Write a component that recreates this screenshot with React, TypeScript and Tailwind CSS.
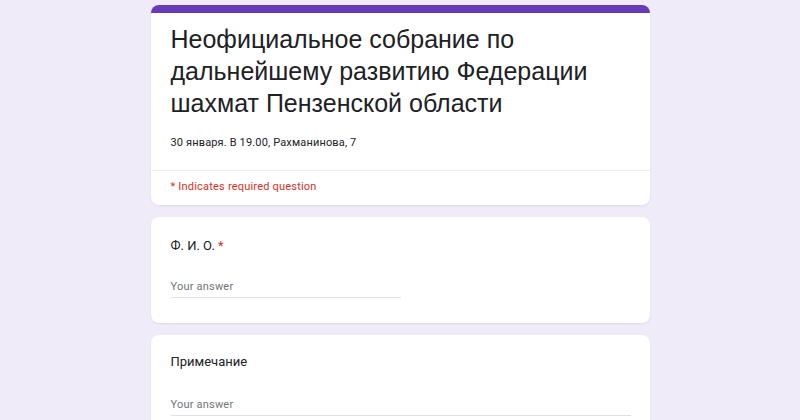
import React from 'react';

function AnswerField({ width }: { width: string }) {
  return (
    <div className={`${width} border-b border-[#e0e0e0] pb-[3px]`}>
      <span className="block text-[11px] leading-[14px] tracking-[0.2px] text-[#70757a]">Your answer</span>
    </div>
  );
}

export default function App() {
  return (
    <div
      className="w-[800px] h-[420px] overflow-hidden bg-[#f0ebf8] flex justify-center"
      style={{ fontFamily: 'Roboto, "Liberation Sans", Arial, sans-serif' }}
    >
      <div className="w-[499px] pt-[5px] flex flex-col gap-[12px]">
        <div className="shrink-0 bg-white rounded-lg overflow-hidden shadow-[0_1px_2px_rgba(0,0,0,0.08)]">
          <div className="h-[8px] bg-[#673ab7]" />
          <div className="px-[20px] pt-[10px] pb-[18px]">
            <h1
              className="text-[25px] leading-[32px] text-[#202124]"
              style={{ fontFamily: '"Liberation Sans", Arial, sans-serif' }}
            >
              Неофициальное собрание по дальнейшему развитию Федерации шахмат Пензенской области
            </h1>
            <p className="mt-[16px] text-[11px] tracking-[0.15px] text-[#202124]">
              30 января. В 19.00, Рахманинова, 7
            </p>
          </div>
          <div className="border-t border-[#eeeeee] px-[20px] pt-[8px] pb-[10px]">
            <p className="text-[11px] tracking-[0.2px] text-[#d93025]">* Indicates required question</p>
          </div>
        </div>

        <div className="shrink-0 bg-white rounded-lg px-[20px] pt-[19px] pb-[25px] shadow-[0_1px_2px_rgba(0,0,0,0.08)]">
          <p className="text-[13px] text-[#202124]">
            Ф. И. О. <span className="text-[#d93025]">*</span>
          </p>
          <div className="mt-[24px]">
            <AnswerField width="w-[230px]" />
          </div>
        </div>

        <div className="shrink-0 bg-white rounded-lg px-[20px] pt-[17px] pb-[25px] shadow-[0_1px_2px_rgba(0,0,0,0.08)]">
          <p className="text-[13px] text-[#202124]">Примечание</p>
          <div className="mt-[27px]">
            <AnswerField width="w-[460px]" />
          </div>
        </div>
      </div>
    </div>
  );
}
